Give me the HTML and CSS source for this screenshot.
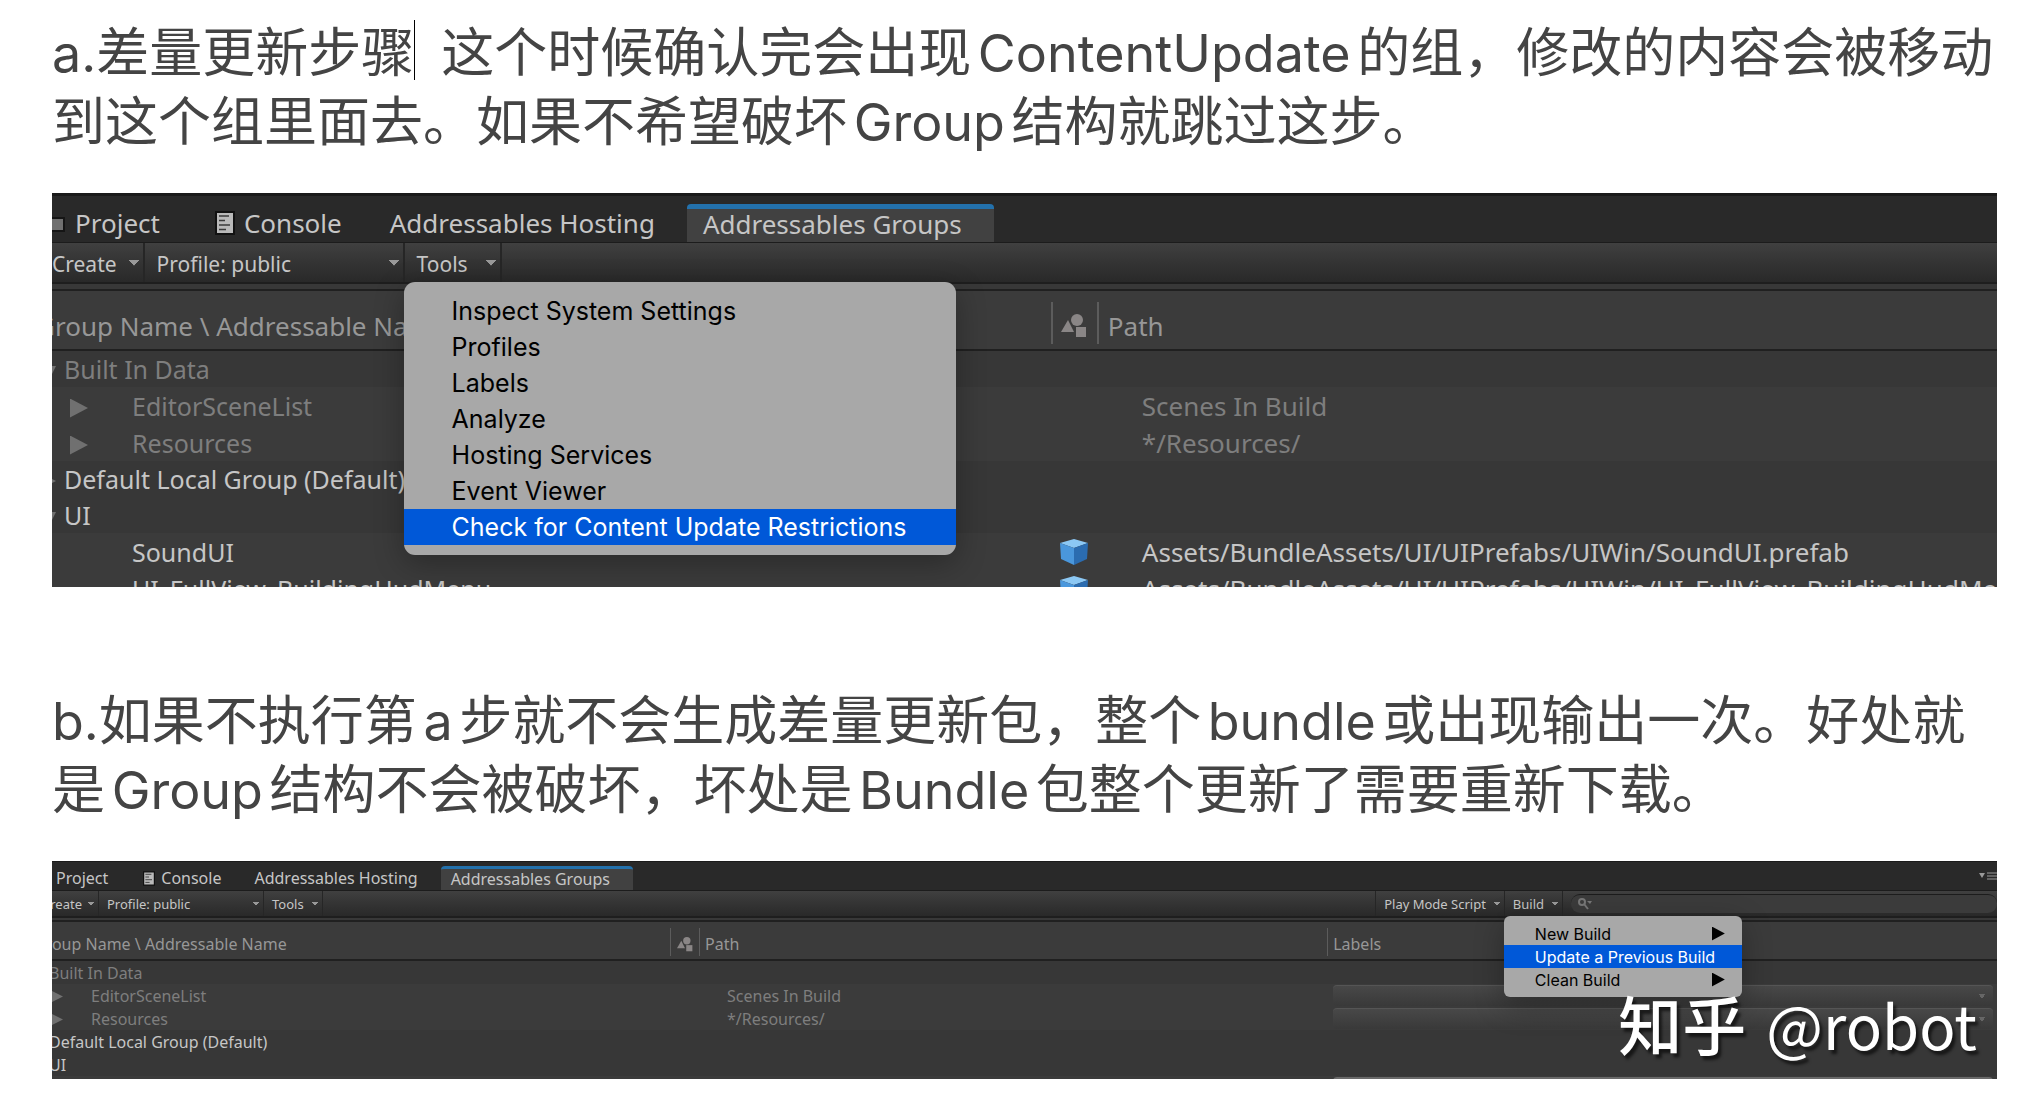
FILE: index.html
```
<!DOCTYPE html>
<html lang="zh-CN">
<head>
    <meta charset="UTF-8">
    <meta name="viewport" content="width=device-width, initial-scale=1.0">
    <title>Addressables 差量更新</title>
    <link rel="stylesheet" href="styles.css">
</head>
<body>
    <!-- Shared icons -->
    <svg class="sprite" aria-hidden="true">
        <symbol id="icon-console" viewBox="0 0 20 24">
            <rect width="20" height="24" fill="#111"/>
            <rect x="2" y="2" width="16" height="20" fill="#b9b9b9"/>
            <path d="M4 5h10M4 9.500h6M4 14h11M4 18.500h7" stroke="#3a3a3a" stroke-width="1.500"/>
        </symbol>
        <symbol id="icon-folder" viewBox="0 0 26 20">
            <path d="M1 2h9l2 3h13v13H1z" fill="#707070" stroke="#151515" stroke-width="2"/>
        </symbol>
        <symbol id="icon-shapes" viewBox="0 0 26 24">
            <path d="M0 18L7 6l6 12z" fill="#8a8686"/>
            <circle cx="16" cy="6" r="6" fill="#8a8686"/>
            <rect x="15" y="13" width="10" height="10" fill="#8a8686"/>
        </symbol>
        <symbol id="icon-cube" viewBox="0 0 28 26">
            <path d="M14 0l14 4-14 5L0 4z" fill="#8cc8f4"/>
            <path d="M0 4l14 5v17L1 20z" fill="#4a97dc"/>
            <path d="M28 4L14 9v17l13-6z" fill="#2b6cb0"/>
        </symbol>
    </svg>

    <main class="article">
        <p><span class="latin step">a.</span>差量更新步骤<span class="caret"></span>这个时候确认完会出现<span class="latin">ContentUpdate</span>的组，修改的内容会被移动到这个组里面去。如果不希望破坏<span class="latin">Group</span>结构就跳过这步。</p>

        <section class="window">
            <div class="window-body">
                <nav class="tabs">
                    <button class="tab tab-project" type="button"><svg class="folder"><use href="#icon-folder"/></svg>Project</button>
                    <button class="tab tab-console" type="button"><svg class="console"><use href="#icon-console"/></svg>Console</button>
                    <button class="tab" type="button">Addressables Hosting</button>
                    <button class="tab active" type="button">Addressables Groups</button>
                </nav>
                <div class="toolbar">
                    <button class="tool create" type="button">Create</button>
                    <select class="tool profile" aria-label="Profile">
                        <option>Profile: public</option>
                    </select>
                    <div class="dropdown">
                        <button class="tool" type="button">Tools</button>
                        <div class="menu tools-menu">
                            <button type="button">Inspect System Settings</button>
                            <button type="button">Profiles</button>
                            <button type="button">Labels</button>
                            <button type="button">Analyze</button>
                            <button type="button">Hosting Services</button>
                            <button type="button">Event Viewer</button>
                            <button class="selected" type="button">Check for Content Update Restrictions</button>
                        </div>
                    </div>
                </div>
                <table class="groups">
                    <colgroup>
                        <col class="col-name">
                        <col class="col-icon">
                        <col>
                    </colgroup>
                    <thead>
                        <tr>
                            <th>Group Name \ Addressable Name</th>
                            <th class="icon"><svg class="shapes"><use href="#icon-shapes"/></svg></th>
                            <th>Path</th>
                        </tr>
                    </thead>
                    <tbody>
                        <tr class="group dim"><td><span class="fold open"></span>Built In Data</td><td></td><td></td></tr>
                        <tr class="entry dim"><td><span class="fold"></span>EditorSceneList</td><td></td><td>Scenes In Build</td></tr>
                        <tr class="entry dim"><td><span class="fold"></span>Resources</td><td></td><td>*/Resources/</td></tr>
                        <tr class="group"><td><span class="fold"></span>Default Local Group (Default)</td><td></td><td></td></tr>
                        <tr class="group"><td><span class="fold open"></span>UI</td><td></td><td></td></tr>
                        <tr class="entry leaf"><td>SoundUI</td><td class="icon"><svg class="cube"><use href="#icon-cube"/></svg></td><td>Assets/BundleAssets/UI/UIPrefabs/UIWin/SoundUI.prefab</td></tr>
                        <tr class="entry leaf"><td>UI_FullView_BuildingHudMenu</td><td class="icon"><svg class="cube"><use href="#icon-cube"/></svg></td><td>Assets/BundleAssets/UI/UIPrefabs/UIWin/UI_FullView_BuildingHudMenu.prefab</td></tr>
                    </tbody>
                </table>
            </div>
        </section>

        <p class="step-b"><span class="latin step">b.</span>如果不执行第<span class="latin">a</span>步就不会生成差量更新包，整个<span class="latin">bundle</span>或出现输出一次。好处就是<span class="latin">Group</span>结构不会被破坏，坏处是<span class="latin">Bundle</span>包整个更新了需要重新下载。</p>

        <section class="window compact">
            <div class="window-body">
                <nav class="tabs">
                    <button class="tab tab-project" type="button">Project</button>
                    <button class="tab tab-console" type="button"><svg class="console"><use href="#icon-console"/></svg>Console</button>
                    <button class="tab" type="button">Addressables Hosting</button>
                    <button class="tab active" type="button">Addressables Groups</button>
                    <button class="pane-menu" type="button" aria-label="Pane options">
                        <svg viewBox="0 0 18 8"><path d="M0 1h6L3 6z" fill="#9a9a9a"/><path d="M8 1h10M8 4h10M8 7h10" stroke="#9a9a9a"/></svg>
                    </button>
                </nav>
                <div class="toolbar">
                    <button class="tool create" type="button">Create</button>
                    <select class="tool profile" aria-label="Profile">
                        <option>Profile: public</option>
                    </select>
                    <button class="tool" type="button">Tools</button>
                    <button class="tool play-mode" type="button">Play Mode Script</button>
                    <div class="dropdown">
                        <button class="tool" type="button">Build</button>
                        <div class="menu build-menu">
                            <button class="submenu" type="button">New Build</button>
                            <button class="selected" type="button">Update a Previous Build</button>
                            <button class="submenu" type="button">Clean Build</button>
                        </div>
                    </div>
                    <label class="search">
                        <svg viewBox="0 0 16 12"><circle cx="5" cy="4" r="3" fill="none" stroke="#777" stroke-width="2"/><path d="M7 6l4 5" stroke="#777" stroke-width="2"/><path d="M10 3h5l-2 3z" fill="#777"/></svg>
                        <input type="search" aria-label="Search">
                    </label>
                </div>
                <table class="groups">
                    <colgroup>
                        <col class="col-name">
                        <col class="col-icon">
                        <col class="col-path">
                        <col>
                    </colgroup>
                    <thead>
                        <tr>
                            <th>Group Name \ Addressable Name</th>
                            <th class="icon"><svg class="shapes"><use href="#icon-shapes"/></svg></th>
                            <th>Path</th>
                            <th>Labels</th>
                        </tr>
                    </thead>
                    <tbody>
                        <tr class="group dim"><td><span class="fold open"></span>Built In Data</td><td></td><td></td><td></td></tr>
                        <tr class="entry dim"><td><span class="fold"></span>EditorSceneList</td><td></td><td>Scenes In Build</td><td><select class="labels" aria-label="EditorSceneList labels"></select></td></tr>
                        <tr class="entry dim"><td><span class="fold"></span>Resources</td><td></td><td>*/Resources/</td><td><select class="labels" aria-label="Resources labels"></select></td></tr>
                        <tr class="group"><td><span class="fold"></span>Default Local Group (Default)</td><td></td><td></td><td></td></tr>
                        <tr class="group"><td><span class="fold open"></span>UI</td><td></td><td></td><td></td></tr>
                        <tr class="entry leaf"><td></td><td></td><td></td><td><select class="labels enabled" aria-label="SoundUI labels"></select></td></tr>
                    </tbody>
                </table>
            </div>
            <div class="watermark"><span class="brand">知乎</span><span>@robot</span></div>
        </section>
    </main>
</body>
</html>
```
FILE: styles.css
```
* {
    box-sizing: border-box;
}

body {
    margin: 0;
    background-color: #fff;
    color: #444;
    font-family: "Inter", "Noto Sans CJK SC", sans-serif;
}

button,
select,
input {
    margin: 0;
    padding: 0;
    border: none;
    border-radius: 0;
    background: none;
    color: inherit;
    font: inherit;
    appearance: none;
}

.sprite {
    position: absolute;
    width: 0;
    height: 0;
}

.article {
    padding: 19px 33px 33px 52px;
}

.article p {
    margin: 0 0 36px;
    font-size: 53px;
    line-height: 69px;
    text-autospace: normal;
}

.article .step-b {
    margin-top: 100px;
}

.latin {
    font-size: 52px;
}

.step {
    display: inline-block;
}

.caret {
    display: inline-block;
    height: 60px;
    margin-right: 26px;
    border-left: 1px solid #000;
    vertical-align: -8px;
}

/* Editor window, cropped on the left and bottom */
.window {
    position: relative;
    height: 394px;
    overflow: hidden;
    background-color: #373737;
    color: #c6c6c6;
    font-family: "Noto Sans", sans-serif;
    font-size: 26px;
}

.window-body {
    margin-left: -18px;
}

.tabs {
    display: flex;
    align-items: flex-end;
    height: 50px;
    background-color: #292929;
    border-top: 3px solid #1a1a1a;
    border-bottom: 1px solid #1c1c1c;
}

.tab {
    display: flex;
    align-items: center;
    height: 39px;
    padding: 0 32px 0 16px;
    white-space: nowrap;
}

.tab.active {
    height: 38px;
    padding-bottom: 4px;
    border-top: 5px solid #2371ac;
    border-radius: 4px 4px 0 0;
    background-color: #414141;
}

.tab-project {
    padding-left: 5px;
    padding-right: 39px;
}

.folder {
    width: 26px;
    height: 20px;
    margin-right: 10px;
}

.console {
    width: 20px;
    height: 24px;
    margin-right: 9px;
}

.toolbar {
    display: flex;
    height: 39px;
    background: linear-gradient(#404040, #363636 40%, #292929);
    font-size: 21px;
}

.tool {
    height: 39px;
    padding: 2px 32px 0 12px;
    border-right: 2px solid #262626;
    background-image: linear-gradient(to bottom left, #999 50%, transparent 51%), linear-gradient(to bottom right, #999 50%, transparent 51%);
    background-repeat: no-repeat;
    background-position: right 9px center, right 4px center;
    background-size: 5px 6px;
    text-align: left;
    white-space: nowrap;
}

.create {
    padding-left: 18px;
    padding-right: 26px;
}

.profile {
    width: 260px;
}

.dropdown {
    position: relative;
}

.menu {
    position: absolute;
    z-index: 1;
    top: 100%;
    left: -1px;
    padding: 11px 0 10px;
    border-radius: 11px;
    background-color: #a8a8a8;
    color: #000;
    box-shadow: 0 8px 30px rgba(0, 0, 0, 0.3);
    font-family: "Inter", sans-serif;
    font-size: 25px;
}

.menu button {
    display: block;
    width: 100%;
    height: 36px;
    padding-left: 48px;
    text-align: left;
    white-space: nowrap;
}

.menu .selected {
    background-color: #0058d8;
    color: #fff;
}

.tools-menu {
    width: 552px;
}

.groups {
    width: 100%;
    border-top: 2px solid #1e1e1e;
    border-spacing: 0;
    table-layout: fixed;
}

.col-name {
    width: 51.8%;
}

.col-icon {
    width: 46px;
}

.groups th {
    height: 67px;
    padding: 18px 0 0 11px;
    border-bottom: 2px solid #202020;
    background:
        linear-gradient(#5c5c5c, #5c5c5c) no-repeat 0 18px / 2px 42px,
        linear-gradient(#383838 5px, #202020 5px, #202020 7px, #3b3b3b 7px);
    color: #979797;
    font-weight: normal;
    text-align: left;
    white-space: nowrap;
}

.groups th:first-child {
    padding-left: 2px;
    background: linear-gradient(#383838 5px, #202020 5px, #202020 7px, #3b3b3b 7px);
}

.groups td {
    height: 36px;
    padding: 0 0 0 45px;
    line-height: 36px;
    overflow: hidden;
    white-space: nowrap;
}

.groups td:first-child {
    font-size: 25px;
}

.groups .entry td {
    height: 37px;
}

.groups .icon {
    padding-left: 0;
    text-align: center;
}

.groups .icon svg {
    display: block;
    margin: 0 auto;
}

.shapes {
    width: 26px;
    height: 24px;
}

.cube {
    width: 28px;
    height: 26px;
}

.groups .entry {
    background-color: #3b3b3b;
}

.groups .dim {
    color: #7e7e7e;
}

.groups .group td:first-child {
    padding-left: 12px;
}

.groups .entry td:first-child {
    padding-left: 36px;
}

.groups .leaf td:first-child {
    padding-left: 98px;
}

.fold {
    display: inline-block;
    width: 62px;
}

.group .fold {
    width: 18px;
}

.fold::before {
    content: "";
    display: block;
    width: 18px;
    height: 19px;
    margin-bottom: -2px;
    background-color: #707070;
    clip-path: polygon(0 0, 100% 50%, 0 100%);
}

.group .fold::before {
    width: 10px;
    height: 10px;
    margin-bottom: 3px;
}

.fold.open::before {
    clip-path: polygon(0 0, 100% 0, 50% 100%);
}

/* Smaller window */
.compact {
    height: 218px;
    font-size: 16px;
}

.compact .tabs {
    height: 30px;
    border-top-width: 1px;
}

.compact .tab {
    height: 24px;
    padding: 0 23px 0 10px;
}

.compact .tab.active {
    padding-bottom: 2px;
    border-top-width: 3px;
}

.compact .tab-project {
    padding-left: 22px;
    padding-right: 25px;
}

.compact .console {
    width: 12px;
    height: 15px;
    margin-right: 6px;
}

.compact .toolbar {
    height: 25px;
    font-size: 13px;
}

.compact .tool {
    height: 25px;
    padding: 1px 18px 0 8px;
    border-right-width: 1px;
    background-position: right 7px center, right 4px center;
    background-size: 3px 4px;
}

.compact .create {
    padding-right: 16px;
}

.compact .profile {
    width: 165px;
}

.compact .play-mode {
    margin-left: auto;
    border-left: 1px solid #262626;
}

.pane-menu {
    display: flex;
    align-self: center;
    margin-left: auto;
}

.pane-menu svg {
    width: 18px;
    height: 8px;
}

.search {
    display: flex;
    width: 21.7%;
    height: 19px;
    margin: 3px 0 0 8px;
    padding-left: 6px;
    border-top: 1px solid #1c1c1c;
    border-radius: 9px;
    background-color: #3b3b3b;
}

.search svg {
    width: 16px;
    height: 12px;
    margin-top: 3px;
}

.search input {
    flex: 1;
    min-width: 0;
}

.compact .menu {
    padding: 6px 0;
    border-radius: 6px;
    font-size: 16px;
}

.compact .menu button {
    height: 23px;
    padding-left: 31px;
}

.build-menu {
    width: 238px;
}

.menu .submenu {
    display: flex;
    align-items: center;
    justify-content: space-between;
    padding-right: 17px;
}

.submenu::after {
    content: "";
    width: 13px;
    height: 14px;
    background-color: #000;
    clip-path: polygon(0 0, 100% 50%, 0 100%);
}

.compact .col-name {
    width: 32.4%;
}

.compact .col-icon {
    width: 29px;
}

.compact .col-path {
    width: 32%;
}

.compact .groups th {
    height: 43px;
    padding: 11px 0 0 6px;
    background:
        linear-gradient(#5c5c5c, #5c5c5c) no-repeat 0 10px / 1px 28px,
        linear-gradient(#383838 2px, #202020 2px, #202020 4px, #3b3b3b 4px);
}

.compact .groups th:first-child {
    padding-left: 0;
    background: linear-gradient(#383838 2px, #202020 2px, #202020 4px, #3b3b3b 4px);
}

.compact .groups th.icon {
    padding-left: 0;
}

.compact .groups td {
    height: 23px;
    padding-left: 28px;
    font-size: 16px;
    line-height: 22px;
}

.compact .groups td:last-child {
    padding: 0 4px 0 6px;
}

.compact .shapes {
    width: 16px;
    height: 15px;
}

.compact .group td:first-child {
    padding-left: 0;
}

.compact .entry td:first-child {
    padding-left: 17px;
}

.compact .fold {
    width: 40px;
}

.compact .group .fold {
    width: 15px;
}

.compact .entry .fold::before {
    width: 12px;
    height: 12px;
    margin-bottom: -1px;
}

.labels {
    display: block;
    width: 100%;
    height: 21px;
    border-top: 1px solid #555;
    border-radius: 4px;
    background:
        linear-gradient(to bottom left, #666 50%, transparent 51%) no-repeat right 11px center / 3px 5px,
        linear-gradient(to bottom right, #666 50%, transparent 51%) no-repeat right 8px center / 3px 5px,
        linear-gradient(#484848, #393939);
}

.labels.enabled {
    border-top: 2px solid #6a6a6a;
}

.watermark {
    position: absolute;
    z-index: 2;
    right: 20px;
    bottom: 13px;
    display: flex;
    gap: 20px;
    align-items: baseline;
    color: #fff;
    font-family: "Noto Sans CJK SC", sans-serif;
    font-size: 60px;
    line-height: 84px;
    text-shadow: 3px 4px 3px rgba(0, 0, 0, 0.6);
}

.brand {
    font-size: 64px;
    font-weight: 500;
}
```
